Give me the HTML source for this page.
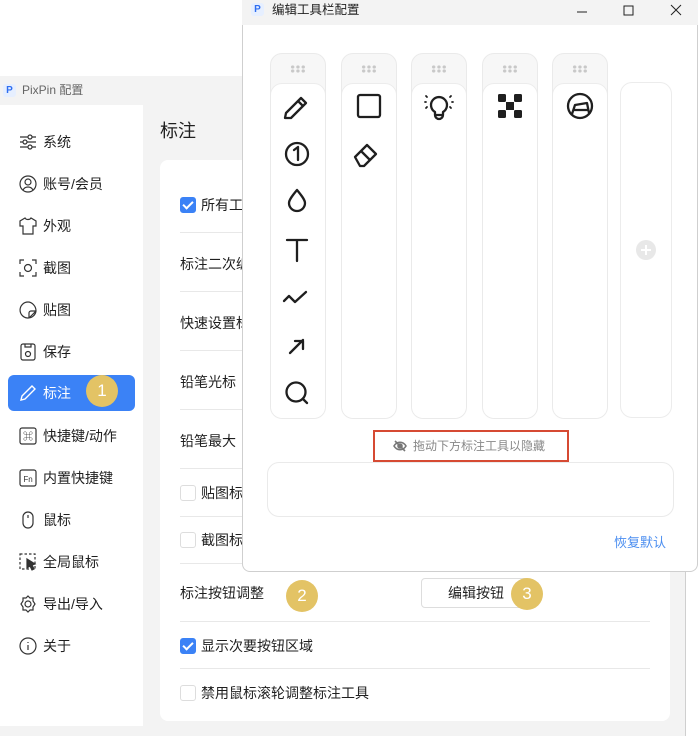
<!DOCTYPE html>
<html><head><meta charset="utf-8"><style>
*{box-sizing:border-box;margin:0;padding:0}
body{width:698px;height:726px;overflow:hidden;background:#fff;font-family:"Liberation Sans","Noto Sans CJK SC",sans-serif;color:#1f1f1f;position:relative}
.abs{position:absolute}
.win{left:0;top:76px;width:686px;height:660px;background:#f3f3f3;border-right:1px solid #cfcfcf;border-top:1px solid #d8d8d8}
.wtitle{left:0;top:76px;width:686px;height:29px;background:#f3f3f3;font-size:12px;color:#666;line-height:29px;padding-left:22px}
.side{left:0;top:105px;width:143px;height:621px;background:#fff}
.item{position:absolute;left:8px;width:127px;height:36px;font-size:14px;line-height:36px;padding-left:35px;color:#1f1f1f}
.item svg{position:absolute;left:11px;top:9px}
.item.act{background:#3b82f6;color:#fff;border-radius:6px}
.card{left:160px;top:160px;width:510px;height:561px;background:#fff;border-radius:8px}
.row{position:absolute;left:180px;font-size:14px;line-height:20px}
.hr{position:absolute;left:180px;width:470px;height:1px;background:#e8e8e8}
.cb{display:inline-block;width:16px;height:16px;border-radius:3px;vertical-align:-3px;margin-right:5px;border:1px solid #ddd;background:#fff}
.cb.on{background:#3b82f6;border-color:#3b82f6;position:relative}
.cb.on:after{content:"";position:absolute;left:4px;top:1px;width:4px;height:8px;border:solid #fff;border-width:0 2px 2px 0;transform:rotate(45deg)}
.badge{position:absolute;width:32px;height:32px;border-radius:50%;background:#e3c365;color:#fff;font-size:17px;text-align:center;line-height:32px}
.dlg{left:242px;top:0;width:456px;height:572px;background:#fff;border:1px solid #cfcfcf;border-top:none;border-radius:0 0 8px 8px}
.dtitle{left:242px;top:0;width:456px;height:25px;background:#f3f3f3;font-size:12.5px;line-height:20px;padding-left:30px;color:#222}
.col{position:absolute;top:53px;width:56px;height:366px;border:1px solid #eaeaea;border-radius:12px;background:#f7f7f7;overflow:hidden}
.col .body{position:absolute;left:-1px;top:29px;width:56px;height:337px;background:#fff;border:1px solid #ececec;border-radius:12px}
.dots{position:absolute;left:19px;top:11px;width:16px;height:8px;background:radial-gradient(circle,#c8c8c8 1.5px,transparent 1.8px) 0 0/5.3px 4px}
</style></head><body>
<div class="abs win"></div>
<div class="abs wtitle">PixPin 配置</div>
<div class="abs" style="left:3px;top:84px;width:13px;height:13px;border-radius:3px;background:#e6efff;color:#2f6ef0;font-size:10px;font-weight:bold;line-height:13px;text-align:center">P</div>
<div class="abs side"></div>
<div class="item" style="top:124px"><svg width="18" height="18" viewBox="0 0 18 18" fill="none" stroke="#333" stroke-width="1.2"><path d="M1 4h16M1 9h16M1 14h16"/><circle cx="11" cy="4" r="2" fill="#fff"/><circle cx="6" cy="9" r="2" fill="#fff"/><circle cx="11" cy="14" r="2" fill="#fff"/></svg>系统</div>
<div class="item" style="top:166px"><svg width="18" height="18" viewBox="0 0 18 18" fill="none" stroke="#333" stroke-width="1.2"><circle cx="9" cy="9" r="8"/><circle cx="9" cy="7" r="3"/><path d="M4 15c2-4 8-4 10 0"/></svg>账号/会员</div>
<div class="item" style="top:208px"><svg width="18" height="18" viewBox="0 0 18 18" fill="none" stroke="#333" stroke-width="1.2"><path d="M6 1L1 4v5h3v8h10V9h3V4l-5-3c-1 2-5 2-6 0z"/></svg>外观</div>
<div class="item" style="top:250px"><svg width="18" height="18" viewBox="0 0 18 18" fill="none" stroke="#333" stroke-width="1.2"><path d="M1 5V1h4M13 1h4v4M17 13v4h-4M5 17H1v-4"/><circle cx="9" cy="9" r="3.5"/></svg>截图</div>
<div class="item" style="top:292px"><svg width="18" height="18" viewBox="0 0 18 18" fill="none" stroke="#333" stroke-width="1.2"><path d="M17 10A8 8 0 1 1 9 1c4 0 8 4 8 9l-7 7M17 10h-5a2 2 0 0 0-2 2v5"/></svg>贴图</div>
<div class="item" style="top:334px"><svg width="18" height="18" viewBox="0 0 18 18" fill="none" stroke="#333" stroke-width="1.2"><rect x="2" y="1" width="14" height="16" rx="2"/><path d="M6 1v3h6V1"/><circle cx="9" cy="11" r="2.5"/></svg>保存</div>
<div class="item act" style="top:375px"><svg width="18" height="18" viewBox="0 0 18 18" fill="none" stroke="#fff" stroke-width="1.4"><path d="M2 16l1-4L13 2l3 3L6 15z"/></svg>标注</div>
<div class="badge" style="left:86px;top:375px">1</div>
<div class="item" style="top:418px"><svg width="18" height="18" viewBox="0 0 18 18" fill="none" stroke="#333" stroke-width="1.2"><rect x="1" y="1" width="16" height="16" rx="2"/><text x="9" y="13" font-size="10" text-anchor="middle" fill="#333" stroke="none">⌘</text></svg>快捷键/动作</div>
<div class="item" style="top:460px"><svg width="18" height="18" viewBox="0 0 18 18" fill="none" stroke="#333" stroke-width="1.2"><rect x="1" y="1" width="16" height="16" rx="2"/><text x="9" y="13" font-size="8" text-anchor="middle" fill="#333" stroke="none">Fn</text></svg>内置快捷键</div>
<div class="item" style="top:502px"><svg width="18" height="18" viewBox="0 0 18 18" fill="none" stroke="#333" stroke-width="1.2"><rect x="4" y="1" width="10" height="16" rx="5"/><path d="M9 4v3"/></svg>鼠标</div>
<div class="item" style="top:544px"><svg width="18" height="18" viewBox="0 0 18 18" fill="none" stroke="#333" stroke-width="1.2" stroke-dasharray="2.5 2"><rect x="1" y="1" width="15" height="15"/><path d="M8 6l8 5-3 1 2 4-2 1-2-4-3 2z" fill="#333" stroke-dasharray="none"/></svg>全局鼠标</div>
<div class="item" style="top:586px"><svg width="18" height="18" viewBox="0 0 18 18" fill="none" stroke="#333" stroke-width="1.2"><path d="M9 1l2 2h3v3l2 3-2 3v3h-3l-2 2-2-2H4v-3L2 9l2-3V3h3z"/><circle cx="9" cy="9" r="3"/></svg>导出/导入</div>
<div class="item" style="top:628px"><svg width="18" height="18" viewBox="0 0 18 18" fill="none" stroke="#333" stroke-width="1.2"><circle cx="9" cy="9" r="8"/><path d="M9 8v5M9 5v1"/></svg>关于</div>

<div class="abs" style="left:160px;top:117px;font-size:18px">标注</div>
<div class="abs card"></div>
<div class="row" style="top:195px"><span class="cb on"></span>所有工</div>
<div class="hr" style="top:232px"></div>
<div class="row" style="top:254px">标注二次编</div>
<div class="hr" style="top:291px"></div>
<div class="row" style="top:313px">快速设置标</div>
<div class="hr" style="top:350px"></div>
<div class="row" style="top:372px">铅笔光标</div>
<div class="hr" style="top:409px"></div>
<div class="row" style="top:431px">铅笔最大</div>
<div class="hr" style="top:468px"></div>
<div class="row" style="top:483px"><span class="cb"></span>贴图标</div>
<div class="hr" style="top:516px"></div>
<div class="row" style="top:530px"><span class="cb"></span>截图标</div>
<div class="hr" style="top:563px"></div>
<div class="row" style="top:583px">标注按钮调整</div>
<div class="badge" style="left:286px;top:580px">2</div>
<div class="abs" style="left:421px;top:578px;width:109px;height:30px;border:1px solid #ddd;border-radius:4px;font-size:14px;line-height:28px;padding-left:26px">编辑按钮</div>
<div class="badge" style="left:511px;top:578px">3</div>
<div class="hr" style="top:621px"></div>
<div class="row" style="top:636px"><span class="cb on"></span>显示次要按钮区域</div>
<div class="hr" style="top:668px"></div>
<div class="row" style="top:683px"><span class="cb"></span>禁用鼠标滚轮调整标注工具</div>

<div class="abs dlg"></div>
<div class="abs dtitle">编辑工具栏配置</div>
<div class="abs" style="left:251px;top:3px;width:13px;height:13px;border-radius:3px;background:#e6efff;color:#2f6ef0;font-size:10px;font-weight:bold;line-height:13px;text-align:center">P</div>
<svg class="abs" style="left:572px;top:3px" width="120" height="14" fill="none" stroke="#222" stroke-width="1"><path d="M5 9h10M52 3h9v9h-9zM99 2l10 10M109 2L99 12"/></svg>

<div class="col" style="left:270px"><div class="dots"></div><div class="body"></div></div>
<div class="col" style="left:341px"><div class="dots"></div><div class="body"></div></div>
<div class="col" style="left:411px"><div class="dots"></div><div class="body"></div></div>
<div class="col" style="left:482px"><div class="dots"></div><div class="body"></div></div>
<div class="col" style="left:552px"><div class="dots"></div><div class="body"></div></div>
<div class="abs" style="left:620px;top:82px;width:52px;height:336px;border:1px solid #ececec;border-radius:12px"></div>
<svg class="abs" style="left:636px;top:240px" width="20" height="20"><circle cx="10" cy="10" r="10" fill="#e8e8e8"/><path d="M10 5v10M5 10h10" stroke="#fff" stroke-width="2"/></svg>

<svg class="abs" style="left:0;top:0" width="698" height="430" fill="none" stroke="#1f1f1f" stroke-width="2.3" stroke-linejoin="round" stroke-linecap="round">
<path d="M285 118l1-5 15-15 5 5-15 15z M298 101l5 5"/>
<circle cx="297" cy="154" r="11"/><path d="M294 150l4-3v13"/>
<path d="M297 190c-5 6-8 10-8 13a8 8 0 0 0 16 0c0-3-3-7-8-13z"/>
<path d="M287 240h20M297 240v21"/>
<path d="M284 301l5-5 6 6 11-10"/>
<path d="M290 353l13-13M295 341h8v8"/>
<circle cx="296" cy="392" r="9.5"/><path d="M303 399l4 4"/>
<rect x="358" y="95" width="22" height="22" rx="2"/>
<path d="M355 157l12-12 9 9-12 12h-4zM361 151l9 9"/>
<path d="M435 112a8 8 0 1 1 8 0v3h-8zM435 115a4 4 0 0 0 8 0"/><path d="M425 102h1M452 102h1M426 96l1 1M451 96l-1 1M426 108l1-1M451 108l-1-1" stroke-width="1.8"/>
<circle cx="580" cy="106" r="12"/><path d="M572 114l3-9 12-2 2 10M574 110h14"/>
</svg>
<svg class="abs" style="left:498px;top:94px" width="24" height="24" fill="#1f1f1f"><rect x="0" y="0" width="8" height="8" rx="1.5"/><rect x="16" y="0" width="8" height="8" rx="1.5"/><rect x="8" y="8" width="8" height="8"/><rect x="0" y="16" width="8" height="8" rx="1.5"/><rect x="16" y="16" width="8" height="8" rx="1.5"/></svg>

<div class="abs" style="left:373px;top:430px;width:196px;height:32px;border:2px solid #d64a33;font-size:12px;color:#888;line-height:28px;padding-left:38px">拖动下方标注工具以隐藏</div>
<svg class="abs" style="left:393px;top:440px" width="14" height="12" fill="none" stroke="#777" stroke-width="1.6"><path d="M1 6c3-5 9-5 12 0-3 5-9 5-12 0z"/><circle cx="7" cy="6" r="2" fill="#777"/><path d="M2 1l10 10"/></svg>
<div class="abs" style="left:267px;top:462px;width:407px;height:55px;border:1px solid #eaeaea;border-radius:12px"></div>
<div class="abs" style="left:614px;top:532px;font-size:13px;color:#4b8ef0">恢复默认</div>
</body></html>
